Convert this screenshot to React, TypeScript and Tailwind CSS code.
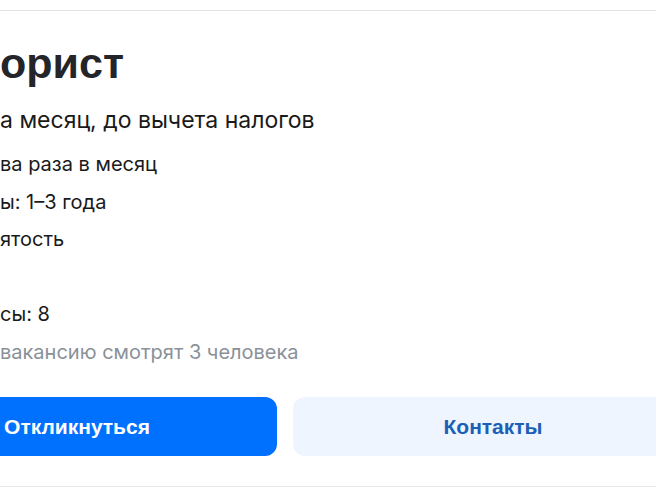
import React from "react";

export default function App() {
  const body = { fontFamily: "Inter, 'Noto Sans', sans-serif" };
  const head = { fontFamily: "'Liberation Sans', Arial, sans-serif" };
  return (
    <div className="w-[656px] h-[492px] overflow-hidden bg-white">
      <div className="h-[10px]" />
      <div className="border-t border-[#e3e3e3]" />
      <div className="mt-[27px] text-[43px] leading-[50px] font-bold text-[#232529]" style={head}>
        орист
      </div>
      <div className="mt-[17px] text-[23px] leading-[30px] text-[#1a1a1a]" style={body}>
        а месяц, до вычета налогов
      </div>
      <div className="mt-[11px] flex flex-col text-[20px] leading-[37.5px] text-[#1a1a1a]" style={body}>
        <div>ва раза в месяц</div>
        <div>ы: 1–3 года</div>
        <div>ятость</div>
        <div>&nbsp;</div>
        <div>сы: 8</div>
        <div className="text-[#8a9199]">вакансию смотрят 3 человека</div>
      </div>
      <div className="mt-[26px] flex gap-4 -ml-[123px]">
        <div
          className="w-[400px] h-[59px] shrink-0 rounded-[12px] bg-[#0070ff] flex items-center justify-center text-white text-[21px] font-bold"
          style={head}
        >
          Откликнуться
        </div>
        <div
          className="w-[400px] h-[59px] shrink-0 rounded-[12px] bg-[#eef5fe] flex items-center justify-center text-[#1d5fb6] text-[21px] font-bold"
          style={head}
        >
          Контакты
        </div>
      </div>
      <div className="mt-[30px] border-t border-[#e6e6e6]" />
    </div>
  );
}
